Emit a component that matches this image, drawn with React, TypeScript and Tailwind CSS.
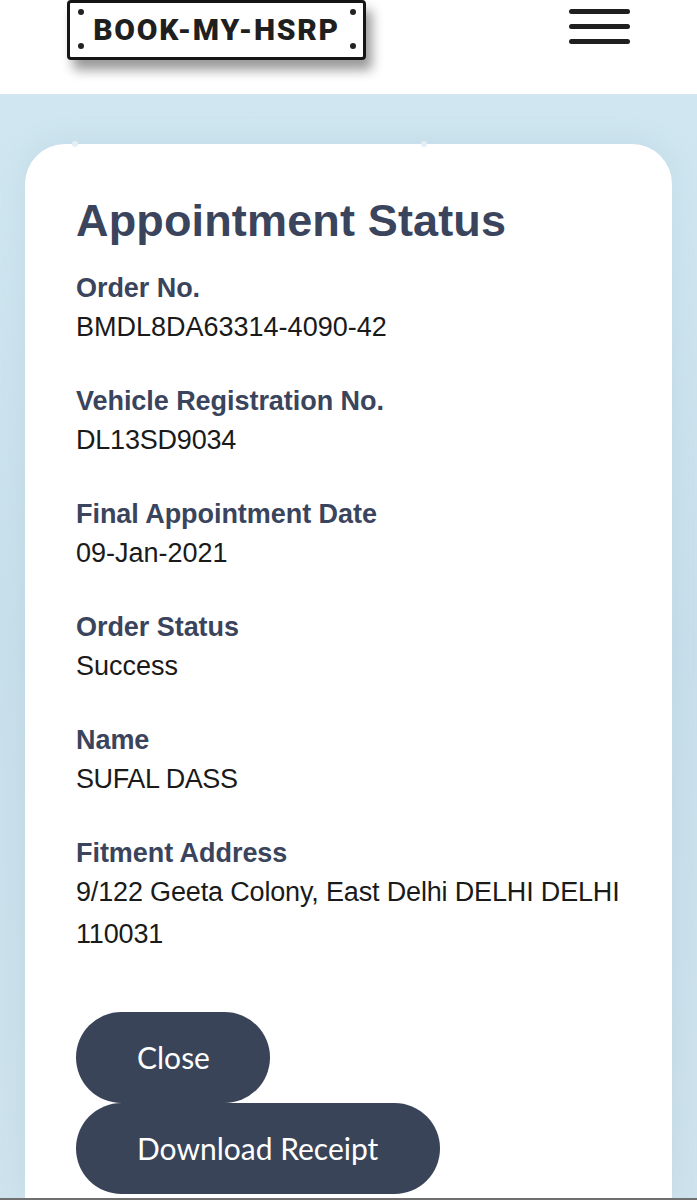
const details = [
  { label: "Order No.", value: "BMDL8DA63314-4090-42", valueClass: "" },
  { label: "Vehicle Registration No.", value: "DL13SD9034", valueClass: "tracking-[-0.2px]" },
  { label: "Final Appointment Date", value: "09-Jan-2021", valueClass: "" },
  { label: "Order Status", value: "Success", valueClass: "" },
  { label: "Name", value: "SUFAL DASS", valueClass: "tracking-[-0.4px]" },
  {
    label: "Fitment Address",
    value: "9/122 Geeta Colony, East Delhi DELHI DELHI 110031",
    valueClass: "tracking-[-0.16px]",
  },
];

function Logo() {
  return (
    <div className="relative flex h-[60px] w-[299px] items-center justify-center rounded-[4px] border-[3px] border-[#151515] bg-white shadow-[6px_10px_12px_rgba(0,0,0,0.4)]">
      <span className="absolute left-[8px] top-[6px] size-[6px] rounded-full bg-[#222]" />
      <span className="absolute right-[7px] top-[6px] size-[6px] rounded-full bg-[#222]" />
      <span className="absolute bottom-[8px] left-[8px] size-[6px] rounded-full bg-[#222]" />
      <span className="absolute bottom-[8px] right-[7px] size-[6px] rounded-full bg-[#222]" />
      <span className="font-['Roboto',sans-serif] text-[30px] font-black leading-none tracking-[1.7px] text-[#1f1f1f]">
        BOOK-MY-HSRP
      </span>
    </div>
  );
}

export default function App() {
  return (
    <div className="flex h-[1200px] flex-col overflow-hidden border-b-2 border-[#6f6f6f] bg-white font-['Liberation_Sans',sans-serif]">
      <header className="flex h-[94px] shrink-0 items-start justify-between pl-[67px] pr-[67px]">
        <Logo />
        <button className="flex w-[61px] flex-col gap-[10px] pt-[9px]">
          <span className="h-[5px] rounded-full bg-[#1f1f1f]" />
          <span className="h-[5px] rounded-full bg-[#1f1f1f]" />
          <span className="h-[5px] rounded-full bg-[#1f1f1f]" />
        </button>
      </header>

      <main className="flex min-h-0 flex-1 flex-col bg-gradient-to-b from-[#d0e7f1] via-[#c8dfeb] to-[#cde2ec] pl-[25px] pr-[25px] pt-[50px]">
        <div className="relative min-h-0 flex-1 rounded-t-[40px] bg-white pl-[51px] pr-[50px] pt-[48px] shadow-[0_-6px_24px_rgba(120,160,185,0.12)]">
          <span className="absolute left-[47px] top-[-3px] size-[6px] rounded-full bg-[#e3eff5]" />
          <span className="absolute left-[396px] top-[-3px] size-[6px] rounded-full bg-[#e3eff5]" />

          <h1 className="text-[45px] font-bold leading-[58px] tracking-[0.15px] text-[#3a445c]">Appointment Status</h1>

          <dl className="mt-[20px] flex flex-col gap-[35px]">
            {details.map((item) => (
              <div key={item.label}>
                <dt className="text-[27px] font-bold leading-[36px] tracking-[-0.05px] text-[#3a445c]">{item.label}</dt>
                <dd className={`text-[27px] leading-[42px] text-[#1a1a1a] ${item.valueClass}`}>{item.value}</dd>
              </div>
            ))}
          </dl>

          <div className="mt-[57px] flex flex-col items-start font-['Lato',sans-serif] text-[30px] text-white">
            <button className="flex h-[91px] items-center rounded-full bg-[#3a4459] pl-[61px] pr-[60px]">Close</button>
            <button className="flex h-[91px] items-center rounded-full bg-[#3a4459] pl-[61px] pr-[62px]">Download Receipt</button>
          </div>
        </div>
      </main>
    </div>
  );
}
